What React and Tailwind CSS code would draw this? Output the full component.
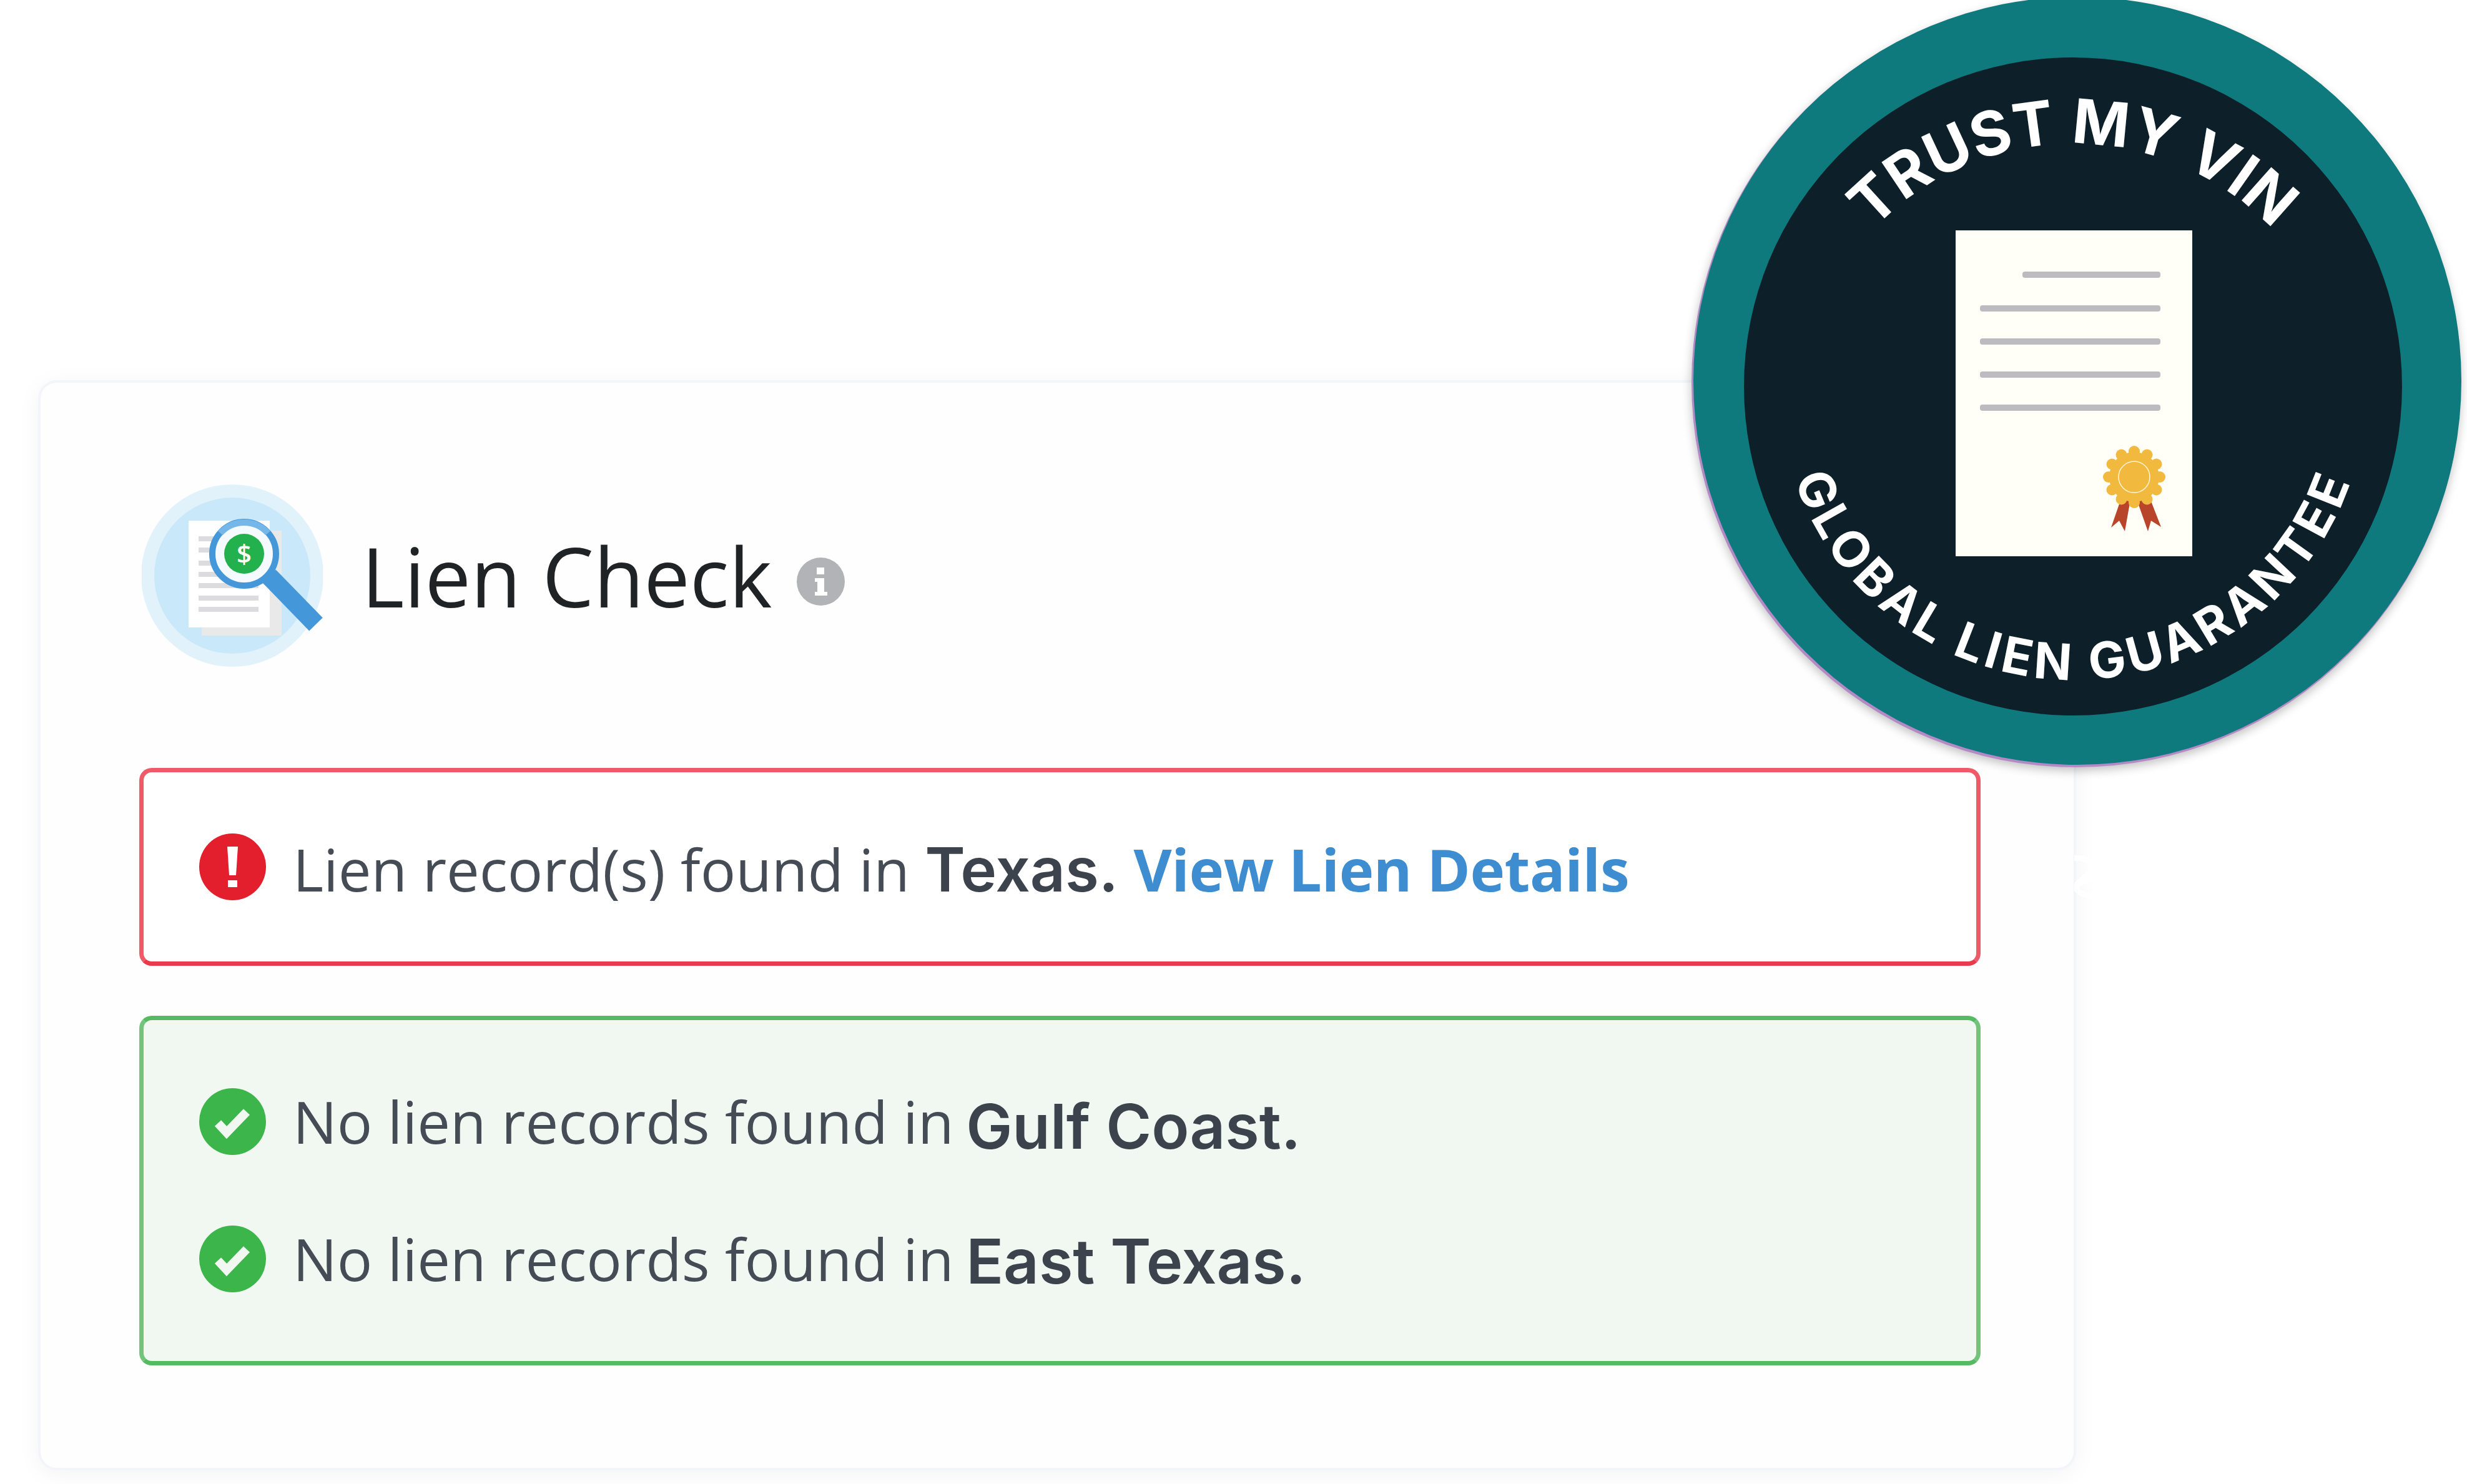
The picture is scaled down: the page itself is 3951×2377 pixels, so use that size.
const sealBumps = Array.from({ length: 12 }, (_, i) => (i * Math.PI) / 6)

function LienIcon() {
  return (
    <svg width="290" height="294" viewBox="226 775 290 294" className="shrink-0 ml-[4px]">
      <circle cx="371" cy="922" r="146" fill="#e2f2fb" />
      <circle cx="371" cy="922" r="125" fill="#c9e9fb" />
      <rect x="322" y="850" width="128" height="168" fill="#e9e9ea" />
      <rect x="301" y="834" width="130" height="171" fill="#ffffff" />
      <g fill="#dcdcde">
        <rect x="317" y="859" width="96" height="8" />
        <rect x="317" y="877" width="96" height="8" />
        <rect x="317" y="898" width="96" height="8" />
        <rect x="317" y="916" width="96" height="8" />
        <rect x="317" y="934" width="96" height="8" />
        <rect x="317" y="954" width="96" height="8" />
        <rect x="317" y="972" width="96" height="8" />
      </g>
      <path d="M430 923 L436 929 L505 1000" stroke="#4497d9" strokeWidth="30" strokeLinecap="butt" />
      <circle cx="390" cy="887" r="51" fill="#f4fafe" stroke="#4497d9" strokeWidth="10" />
      <path d="M352 854 A51 51 0 0 1 428 854" fill="none" stroke="#76b7ea" strokeWidth="10" />
      <circle cx="390" cy="887" r="32" fill="#22b14c" />
      <text x="390" y="902" textAnchor="middle" fontSize="42" fontWeight="600" fill="#ffffff" fontFamily="'Open Sans', sans-serif">$</text>
    </svg>
  )
}

function InfoIcon() {
  return (
    <svg width="77" height="79" viewBox="0 0 77 79" className="shrink-0">
      <circle cx="38.5" cy="39.5" r="38.5" fill="#b1b3b6" />
      <rect x="32" y="17" width="12" height="11" fill="#ffffff" />
      <path d="M29 34 H44 V56 H49 V62 H29 V56 H33 V40 H29 Z" fill="#ffffff" />
    </svg>
  )
}

function AlertIcon() {
  return (
    <svg width="107" height="107" viewBox="0 0 107 107" className="shrink-0">
      <circle cx="53.5" cy="53.5" r="53.5" fill="#e31f2d" />
      <path d="M45 21 H62 L59 67 H48 Z" fill="#ffffff" />
      <rect x="46" y="75" width="15" height="11" fill="#ffffff" />
    </svg>
  )
}

function CheckIcon() {
  return (
    <svg width="107" height="107" viewBox="0 0 107 107" className="shrink-0">
      <circle cx="53.5" cy="53.5" r="53.5" fill="#3cb54a" />
      <path d="M30 56 L44 71 L76 38" fill="none" stroke="#f1f7f1" strokeWidth="14" />
    </svg>
  )
}

function Badge() {
  return (
    <svg width="1271" height="1270" viewBox="2680 -20 1271 1270" className="absolute left-[2680px] top-[-20px]">
      <defs>
        <path id="topArc" d="M2879 671 A441 441 0 0 1 3761 671" />
        <path id="bottomArc" d="M2850 619 A470 470 0 0 0 3790 619" />
        <filter id="badgeBlur" x="-10%" y="-10%" width="120%" height="120%">
          <feGaussianBlur stdDeviation="8" />
        </filter>
      </defs>
      <circle cx="3325" cy="618" r="616" fill="#000000" opacity="0.25" filter="url(#badgeBlur)" />
      <circle cx="3325" cy="613" r="616" fill="#b48ac6" />
      <circle cx="3327" cy="610" r="615" fill="#0e7a7d" />
      <circle cx="3320" cy="619" r="527" fill="#0d2029" />
      <text fontSize="98" fontWeight="700" fill="#ffffff" fontFamily="Inter, sans-serif" textAnchor="middle" letterSpacing="0">
        <textPath href="#topArc" startOffset="50%">TRUST MY VIN</textPath>
      </text>
      <text fontSize="80" fontWeight="700" fill="#ffffff" fontFamily="Inter, sans-serif" textAnchor="middle" letterSpacing="6.5">
        <textPath href="#bottomArc" startOffset="50%">GLOBAL LIEN GUARANTEE</textPath>
      </text>
      <rect x="3132" y="369" width="379" height="522" fill="#fffff8" />
      <g fill="#bcbcc0">
        <rect x="3239" y="435" width="221" height="10" rx="4" />
        <rect x="3171" y="489" width="289" height="10" rx="4" />
        <rect x="3171" y="542" width="289" height="10" rx="4" />
        <rect x="3171" y="595" width="289" height="10" rx="4" />
        <rect x="3171" y="648" width="289" height="10" rx="4" />
      </g>
      <path d="M3400 790 L3381 845 L3394 834 L3403 851 L3412 800 Z" fill="#b8452a" />
      <path d="M3422 800 L3440 851 L3445 834 L3461 844 L3440 790 Z" fill="#b8452a" />
      <g fill="#f2b93f">
        <circle cx="3418" cy="764" r="40" />
        {sealBumps.map(a => (
          <circle key={a} cx={3418 + 41 * Math.cos(a)} cy={764 + 41 * Math.sin(a)} r="9" />
        ))}
      </g>
      <circle cx="3418" cy="764" r="25" fill="none" stroke="#fff5d8" strokeWidth="1.5" />
    </svg>
  )
}

function Row({ icon, children }) {
  return (
    <div className="flex items-center gap-[43px] h-[107px]">
      {icon}
      <p className="text-[94px] leading-[107px] text-[#454c56] whitespace-nowrap">{children}</p>
    </div>
  )
}

export default function App() {
  return (
    <div className="relative w-[3951px] h-[2377px] overflow-hidden bg-white pl-[61px] pt-[609px] font-['Open_Sans',sans-serif]">
      {/* card */}
      <div className="w-[3264px] h-[1746px] rounded-[30px] bg-[#fefefe] border-4 border-[#f3f5fb] shadow-[0_6px_36px_rgba(0,0,0,0.05)] pl-[158px] pt-[162px]">
        <div className="flex items-center h-[293px]">
          <LienIcon />
          <h1 className="ml-[62px] mt-[2px] text-[131px] font-medium leading-none text-[#1f2326] whitespace-nowrap">Lien Check</h1>
          <div className="ml-[40px] mt-[20px]"><InfoIcon /></div>
        </div>

        <div className="mt-[162px] w-[2949px] h-[317px] rounded-[20px] border-[7px] border-[#ef5a68] border-b-[#ea3b4c] bg-white pl-[89px] flex items-center">
          <Row icon={<AlertIcon />}>
            <span className="relative top-[4px]">
              Lien record(s) found in{' '}
              <span className="font-['Inter',sans-serif] text-[98px] font-semibold text-[#3d434d]">Texas.</span>{' '}
              <span className="font-bold tracking-[-0.4px] text-[#3d8dd0]">View Lien Details</span>
            </span>
          </Row>
        </div>

        <div className="mt-[80px] w-[2949px] h-[560px] rounded-[20px] border-[7px] border-[#72c47c] border-y-[#56ba62] bg-[#f1f7f1] pl-[89px] pt-[109px] flex flex-col gap-[113px]">
          <Row icon={<CheckIcon />}>
            No lien records found in{' '}
            <span className="inline-block -ml-[5px] translate-y-[8px] font-['Inter',sans-serif] text-[99px] font-semibold text-[#3d434d]">Gulf Coast.</span>
          </Row>
          <Row icon={<CheckIcon />}>
            No lien records found in{' '}
            <span className="inline-block -ml-[5px] translate-y-[4px] font-['Inter',sans-serif] text-[99px] font-semibold text-[#3d434d]">East Texas.</span>
          </Row>
        </div>
      </div>

      {/* faint mark on the card edge */}
      <svg width="60" height="110" viewBox="0 0 60 110" className="absolute left-[3322px] top-[1368px]">
        <path d="M0 6 C30 6 36 24 18 36 L0 52 C20 78 50 64 44 46 C36 32 10 46 0 52" fill="none" stroke="#ffffff" strokeWidth="9" />
      </svg>

      <Badge />
    </div>
  )
}
